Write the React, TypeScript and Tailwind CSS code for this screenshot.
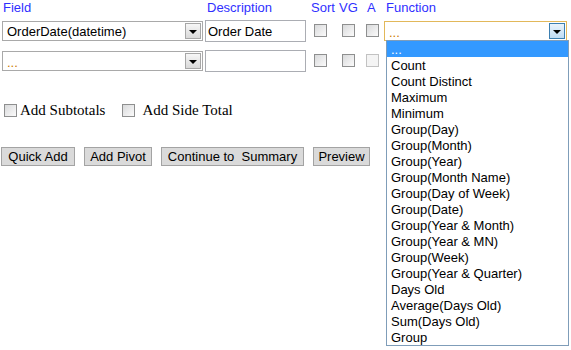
const FN_OPTIONS = [
  "...",
  "Count",
  "Count Distinct",
  "Maximum",
  "Minimum",
  "Group(Day)",
  "Group(Month)",
  "Group(Year)",
  "Group(Month Name)",
  "Group(Day of Week)",
  "Group(Date)",
  "Group(Year & Month)",
  "Group(Year & MN)",
  "Group(Week)",
  "Group(Year & Quarter)",
  "Days Old",
  "Average(Days Old)",
  "Sum(Days Old)",
  "Group",
];

const Arrow = ({ focused }: { focused?: boolean }) => (
  <div
    className={`flex items-center justify-center w-[16px] h-[16px] border ${
      focused
        ? "border-[#3c7fb1] bg-gradient-to-b from-[#eaf4fc] to-[#bfdcf3]"
        : "border-[#a7a7a7] bg-gradient-to-b from-[#f7f7f7] to-[#d9d9d9]"
    }`}
  >
    <div className="w-0 h-0 border-l-[4px] border-r-[4px] border-t-[4px] border-l-transparent border-r-transparent border-t-black mt-[1px]" />
  </div>
);

const Select = ({
  value,
  width,
  placeholder,
  focused,
}: {
  value: string;
  width: string;
  placeholder?: boolean;
  focused?: boolean;
}) => (
  <div
    className={`flex items-center justify-between h-[20px] bg-white border pl-[4px] pr-[1px] ${width} ${
      focused ? "border-[#e2b85a]" : "border-[#a9a9a9]"
    }`}
  >
    <span
      className={`text-[13px] leading-[15px] ${
        placeholder ? "text-[#cc7a00] pt-[3px]" : "text-black"
      }`}
    >
      {value}
    </span>
    <Arrow focused={focused} />
  </div>
);

const Check = ({ disabled }: { disabled?: boolean }) => (
  <div
    className={`w-[13px] h-[13px] border ${
      disabled
        ? "border-[#c2c2c2] bg-[#f4f4f4]"
        : "border-[#8e8f8f] bg-gradient-to-br from-[#d9dadb] to-[#fbfbfb]"
    }`}
  />
);

const TextBox = ({ value }: { value: string }) => (
  <div className="flex items-center w-[101px] h-[22px] border border-[#abadb3] bg-white px-[2px]">
    <span className="text-[13px] leading-[15px] text-black">{value}</span>
  </div>
);

export default function App() {
  return (
    <div className="relative w-[571px] h-[350px] bg-white font-['Liberation_Sans',Arial,sans-serif] text-black overflow-hidden">
      {/* header */}
      <div className="flex h-[15px] text-[13px] leading-[15px] text-[#2f2fff]">
        <div className="w-[205px] pl-[3px]">Field</div>
        <div className="w-[106px] pl-[2px]">Description</div>
        <div className="w-[28px]">Sort</div>
        <div className="w-[25px]">VG</div>
        <div className="w-[22px] pl-[3px]">A</div>
        <div>Function</div>
      </div>

      {/* row 1 */}
      <div className="flex items-center h-[22px] mt-[5px]">
        <div className="w-[205px] pl-[2px]">
          <Select value="OrderDate(datetime)" width="w-[201px]" />
        </div>
        <div className="w-[106px]">
          <TextBox value="Order Date" />
        </div>
        <div className="w-[28px] pl-[3px] mb-[2px]">
          <Check />
        </div>
        <div className="w-[25px] pl-[3px] mb-[2px]">
          <Check />
        </div>
        <div className="w-[20px] pl-[2px] mb-[2px]">
          <Check />
        </div>
        <div>
          <Select value="..." width="w-[183px]" placeholder focused />
        </div>
      </div>

      {/* row 2 */}
      <div className="flex items-center h-[22px] mt-[8px]">
        <div className="w-[205px] pl-[2px]">
          <Select value="..." width="w-[201px]" placeholder />
        </div>
        <div className="w-[106px]">
          <TextBox value="" />
        </div>
        <div className="w-[28px] pl-[3px] mb-[2px]">
          <Check />
        </div>
        <div className="w-[25px] pl-[3px] mb-[2px]">
          <Check />
        </div>
        <div className="w-[20px] pl-[2px] mb-[2px]">
          <Check disabled />
        </div>
      </div>

      {/* totals */}
      <div className="flex items-center h-[20px] mt-[28px] font-['Liberation_Serif','Times_New_Roman',serif] text-[15px] leading-[18px]">
        <div className="ml-[4px]">
          <Check />
        </div>
        <span className="ml-[3px]">Add Subtotals</span>
        <div className="ml-[17px]">
          <Check />
        </div>
        <span className="ml-[7px]">Add Side Total</span>
      </div>

      {/* buttons */}
      <div className="flex mt-[27px] pl-[1px] gap-[9px] text-[13px] leading-[15px]">
        <button className="w-[74px] h-[19px] bg-[#dadada] border border-[#a3a3a3]">Quick Add</button>
        <button className="w-[68px] h-[19px] bg-[#dadada] border border-[#a3a3a3]">Add Pivot</button>
        <button className="w-[143px] h-[19px] bg-[#dadada] border border-[#a3a3a3] whitespace-pre">
          Continue to  Summary
        </button>
        <button className="w-[57px] h-[19px] bg-[#dadada] border border-[#a3a3a3]">Preview</button>
      </div>

      {/* open function dropdown */}
      <div className="absolute left-[386px] top-[40px] w-[183px] h-[306px] border border-[#7f9db9] bg-white">
        {FN_OPTIONS.map((o, i) => (
          <div
            key={o}
            className={`h-[16px] pl-[4px] pt-[1px] text-[13px] leading-[15px] ${
              i === 0 ? "bg-[#3399ff] text-white" : "text-black"
            }`}
          >
            {o}
          </div>
        ))}
      </div>
    </div>
  );
}
